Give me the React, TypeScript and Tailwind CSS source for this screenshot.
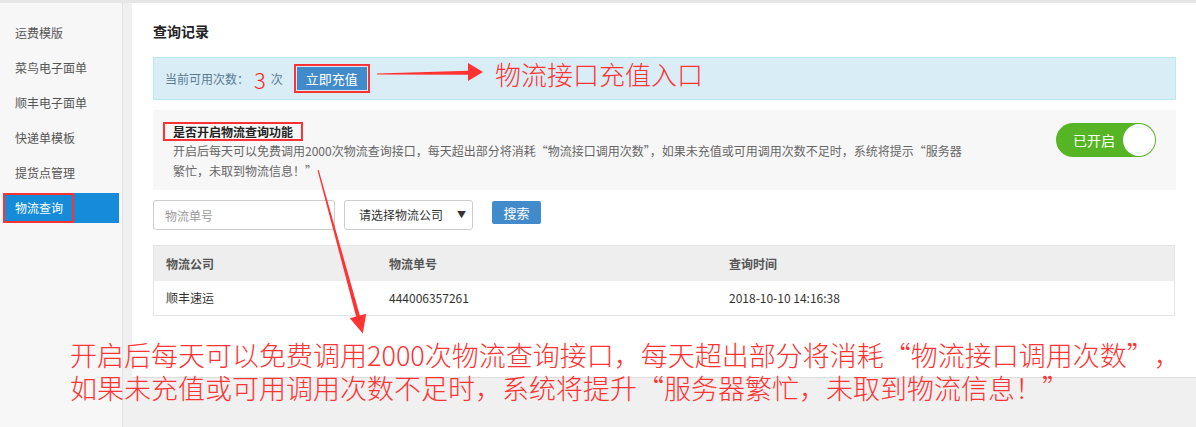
import React from "react";

const sideItems = ["运费模版", "菜鸟电子面单", "顺丰电子面单", "快递单模板", "提货点管理"];

function LQ() {
  return <span className="inline-block w-[1em] text-right">“</span>;
}
function RQ() {
  return <span className="inline-block w-[1em] text-left">”</span>;
}

export default function App() {
  return (
    <div className="relative h-[427px] w-[1196px] overflow-hidden bg-[#f0f0f0] font-['Noto_Sans_CJK_SC','Liberation_Sans',sans-serif] text-[12px] text-[#333]">
      <div className="h-[3px] bg-[#e6e6e6]" />
      <div className="flex gap-[9px]">
        {/* Sidebar */}
        <div className="flex h-[424px] w-[123px] flex-col gap-[5px] border-r border-[#e2e2e2] bg-[#f7f7f7] pt-[15px]">
          {sideItems.map((t) => (
            <div key={t} className="flex h-[30px] items-center pl-[15px] leading-[30px] text-[#555]">
              {t}
            </div>
          ))}
          <div className="relative mx-[3px] flex h-[30px] items-center bg-[#168bd8] pl-[12px] text-white">
            物流查询
            <div className="absolute left-0 top-0 h-[30px] w-[71px] border-2 border-[#ff3333]" />
          </div>
        </div>

        {/* Main panel */}
        <div className="h-[375px] w-[1064px] border-b border-[#dedede] bg-white pl-[21px] pr-[20px] pt-[18px]">
          <div className="h-[20px] text-[14px] font-bold leading-[20px] text-[#222]">查询记录</div>

          {/* Info bar */}
          <div className="mt-[16px] flex h-[43px] items-center border border-[#bce8f1] bg-[#d9edf7] pl-[11px] text-[#5b7a90]">
            <span>当前可用次数：</span>
            <span className="ml-[5px] text-[22px] font-light leading-[22px] text-[#ff1a1a]">3</span>
            <span className="ml-[5px]">次</span>
            <div className="ml-[11px] border-2 border-[#ff3333] p-[1px]">
              <div className="flex h-[23px] w-[70px] items-center justify-center bg-[#428bca] text-[13px] text-white">
                立即充值
              </div>
            </div>
          </div>

          {/* Toggle section */}
          <div className="mt-[10px] flex h-[80px] items-start justify-between bg-[#f7f7f7] pl-[10px] pr-[20px] pt-[12px]">
            <div>
              <span className="inline-block border-2 border-[#ff3333] px-[8px] text-[12px] font-bold leading-[15px] text-[#222]">
                是否开启物流查询功能
              </span>
              <div className="pl-[10px] text-[12px] leading-[20px] text-[#666]">
                开启后每天可以免费调用2000次物流查询接口，每天超出部分将消耗“物流接口调用次数”，如果未充值或可用调用次数不足时，系统将提示“服务器
                <br />
                繁忙，未取到物流信息！”
              </div>
            </div>
            <div className="relative mt-[1px] flex h-[34px] w-[100px] items-center rounded-full bg-[#55b524] pl-[17px] text-[14px] text-white">
              已开启
              <div className="absolute right-[1px] top-[1px] h-[32px] w-[32px] rounded-full bg-white" />
            </div>
          </div>

          {/* Search row */}
          <div className="mt-[10px] flex items-start">
            <input
              placeholder="物流单号"
              className="h-[30px] w-[182px] rounded-[3px] border border-[#ccc] bg-white pl-[11px] text-[12px] outline-none placeholder:text-[#999]"
            />
            <div className="ml-[9px] flex h-[30px] w-[129px] items-center justify-between rounded-[3px] border border-[#ccc] bg-white pl-[14px] pr-[6px] text-[12px] text-[#333]">
              <span>请选择物流公司</span>
              <span className="text-[9px]">▼</span>
            </div>
            <div className="ml-[19px] mt-[1px] flex h-[23px] w-[49px] items-center justify-center rounded-[2px] bg-[#428bca] text-[13px] text-white">
              搜索
            </div>
          </div>

          {/* Table */}
          <div className="mt-[15px] w-[1022px] border border-[#e5e5e5]">
            <div className="grid h-[35px] grid-cols-[223px_340px_1fr] items-center bg-[#eee] font-bold text-[#555]">
              <div className="pl-[12px]">物流公司</div>
              <div className="pl-[12px]">物流单号</div>
              <div className="pl-[12px]">查询时间</div>
            </div>
            <div className="grid h-[34px] grid-cols-[223px_340px_1fr] items-center text-[#333]">
              <div className="pl-[12px]">顺丰速运</div>
              <div className="pl-[12px]">444006357261</div>
              <div className="pl-[12px]">2018-10-10 14:16:38</div>
            </div>
          </div>
        </div>
      </div>

      {/* Annotations overlay */}
      <svg className="pointer-events-none absolute left-0 top-0" width="1196" height="427" viewBox="0 0 1196 427">
        <polygon points="377,73.6 468,70.8 468,63 483,72 468,81 468,74.8 377,74.6" fill="#ff3333" />
        <polygon points="317.5,170.2 356.1,316.5 349.8,318.2 362.8,333.6 366.2,313.8 359.9,315.5 318.7,169.9" fill="#ff3333" />
      </svg>
      <div className="pointer-events-none absolute left-[495px] top-[58px] text-[26px] font-light leading-[32px] text-[#ff3333]">
        物流接口充值入口
      </div>
      <div className="pointer-events-none absolute left-[70px] top-[338px] whitespace-nowrap text-[27px] font-light leading-[33px] text-[#ff3333]">
        开启后每天可以免费调用2000次物流查询接口，每天超出部分将消耗<LQ />物流接口调用次数<RQ />，
        <br />
        如果未充值或可用调用次数不足时，系统将提升<LQ />服务器繁忙，未取到物流信息！<RQ />
      </div>
    </div>
  );
}
